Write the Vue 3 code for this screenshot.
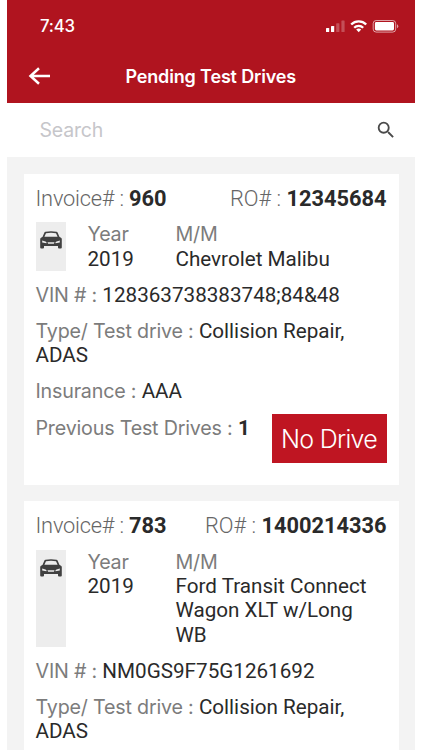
<script setup>
const drives = [
  {
    invoice: '960', ro: '12345684', year: '2019', model: 'Chevrolet Malibu',
    vin: '128363738383748;84&48', type: 'Collision Repair, ADAS', insurance: 'AAA', previous: '1'
  },
  {
    invoice: '783', ro: '1400214336', year: '2019', model: 'Ford Transit Connect Wagon XLT w/Long WB',
    vin: 'NM0GS9F75G1261692', type: 'Collision Repair, ADAS'
  }
]
</script>

<template>
  <div class="screen">
    <header class="header">
      <div class="status">
        <span class="time">7:43</span>
        <svg class="status-icons" width="74" height="16" viewBox="0 0 74 16">
          <g fill="#fff">
            <rect x="0" y="10" width="3.200" height="4" rx=".6" />
            <rect x="5" y="8" width="3.200" height="6" rx=".6" />
            <rect x="10.200" y="5.200" width="3.200" height="8.800" rx=".6" opacity=".25" />
            <rect x="15.400" y="2.500" width="3.200" height="11.500" rx=".6" opacity=".25" />
          </g>
          <g fill="none" stroke="#fff" stroke-width="2.300">
            <path d="M25.200 6.500a10.500 10.500 0 0 1 15 0" />
            <path d="M28.200 9.700a6.400 6.400 0 0 1 9 0" />
          </g>
          <path fill="#fff" d="M30.200 11.600a3.600 3.600 0 0 1 5 0L32.700 14.200z" />
          <rect x="47.200" y="2.500" width="22.500" height="11.600" rx="3" fill="none" stroke="#fff" stroke-opacity=".6" />
          <rect x="48.900" y="4.100" width="19.100" height="8.400" rx="1.400" fill="#fff" />
          <path d="M71 6.300a2.200 2.200 0 0 1 0 4z" fill="#fff" opacity=".6" />
        </svg>
      </div>
      <div class="nav">
        <svg class="back" width="24" height="20" viewBox="0 0 24 20" fill="none" stroke="#fff" stroke-width="2.500">
          <path d="M23 10H3.500M12 2.300L3.500 10l8.500 7.700" />
        </svg>
        <h1 class="title">Pending Test Drives</h1>
      </div>
    </header>

    <div class="search">
      <span class="placeholder">Search</span>
      <svg class="magnifier" width="22" height="22" viewBox="0 0 24 24" fill="#4a4a4a">
        <path d="M15.500 14h-.79l-.28-.27A6.471 6.471 0 0 0 16 9.500 6.500 6.500 0 1 0 9.500 16c1.610 0 3.090-.59 4.230-1.570l.27.28v.79l5 4.990L20.490 19l-4.990-5zm-6 0C7.010 14 5 11.990 5 9.500S7.010 5 9.500 5 14 7.010 14 9.500 11.990 14 9.500 14z" />
      </svg>
    </div>

    <main class="list">
      <article v-for="d in drives" :key="d.invoice" class="card">
        <div class="top">
          <div><span class="thin invoice">Invoice# : </span><b>{{ d.invoice }}</b></div>
          <div><span class="thin">RO# : </span><b>{{ d.ro }}</b></div>
        </div>
        <div class="vehicle">
          <div class="thumb">
            <svg width="22" height="18" viewBox="0 0 22 18">
              <path fill="#404040" fill-rule="evenodd" d="M5.500.7Q11-.3 16.500.7q.9.2 1.200 1l1.700 4 1.900 1.400q.5.400.5 1.100v8.300q0 1-1 1h-1.800q-1 0-1-1v-1.600H4v1.600q0 1-1 1H1.200q-1 0-1-1V8.200q0-.7.500-1.100l1.900-1.400 1.700-4q.3-.8 1.200-1zM6 2.200 4.400 5.800h13.200L16 2.200Q11 1.400 6 2.200zM2.200 9.600v1.900l4.200.8q.5-1.500-1-1.900zM19.800 9.600v1.900l-4.200.8q-.5-1.500 1-1.900zM7.500 11.300l.6 1.500h5.800l.6-1.500z" />
            </svg>
          </div>
          <div class="year"><div class="label">Year</div><div>{{ d.year }}</div></div>
          <div class="model"><div class="label">M/M</div><div>{{ d.model }}</div></div>
        </div>
        <div><span class="label">VIN # : </span>{{ d.vin }}</div>
        <div><span class="label">Type/ Test drive : </span>{{ d.type }}</div>
        <div v-if="d.insurance"><span class="label">Insurance : </span>{{ d.insurance }}</div>
        <div v-if="d.previous" class="bottom">
          <div><span class="label">Previous Test Drives : </span><b>{{ d.previous }}</b></div>
          <button class="no-drive">No Drive</button>
        </div>
      </article>
    </main>
  </div>
</template>

<style>
body { margin: 0; background: #fff; overflow: hidden; }
</style>

<style scoped>
.screen {
  box-sizing: border-box;
  width: 407.5px;
  height: 750px;
  margin-left: 7px;
  overflow: hidden;
  background: #f3f3f3;
  color: #2a2a2a;
  font-family: Roboto, sans-serif;
}
.header {
  height: 102.500px;
  background: #b0141f;
  color: #fff;
  font-family: Inter, sans-serif;
}
.status {
  display: flex;
  justify-content: space-between;
  align-items: center;
  height: 51px;
  padding: 0 14.500px 0 33px;
}
.time { font-size: 16.800px; font-weight: 500; letter-spacing: -.2px; }
.nav {
  display: grid;
  grid-template-columns: 44px 1fr 44px;
  align-items: center;
  height: 50px;
}
.back { margin-left: 20px; }
.title { margin: 0; text-align: center; font-size: 18px; font-weight: 600; letter-spacing: -.15px; }
.search {
  display: flex;
  justify-content: space-between;
  align-items: center;
  height: 54.500px;
  padding: 0 18px 0 32.500px;
  background: #fff;
}
.placeholder { font: 400 19.500px Inter, sans-serif; letter-spacing: -.2px; color: #c6c6ca; }
.list { padding: 16.500px 16px 0 16.500px; }
.card {
  display: flex;
  flex-direction: column;
  gap: 11.750px;
  box-sizing: border-box;
  height: 311px;
  margin-bottom: 16.400px;
  padding: 12.500px 12px;
  background: #fff;
  font-size: 20.650px;
  line-height: 24.400px;
}
.card:last-child { height: 400px; }
.label { color: #7c7c7c; font-family: Inter, sans-serif; font-size: 19.700px; letter-spacing: -.2px; }
.top {
  display: flex;
  justify-content: space-between;
  height: 24.400px;
  font-size: 21.800px;
  line-height: 26px;
}
.thin { color: #666; font-weight: 300; }
.invoice { letter-spacing: -.2px; }
.vehicle { display: flex; }
.thumb {
  display: flex;
  flex: none;
  justify-content: center;
  box-sizing: border-box;
  width: 30.500px;
  padding-top: 9px;
  background: #ededed;
}
.year { flex: none; width: 88px; margin-left: 21.500px; }
.model { width: 205px; }
.bottom { display: flex; justify-content: space-between; }
.no-drive {
  width: 115px;
  height: 48.500px;
  margin-top: -1.500px;
  padding: 2px 0 0;
  border: 0;
  background: #bf1522;
  color: #fff;
  font: 300 25px Inter, sans-serif;
  letter-spacing: -.75px;
}
</style>
